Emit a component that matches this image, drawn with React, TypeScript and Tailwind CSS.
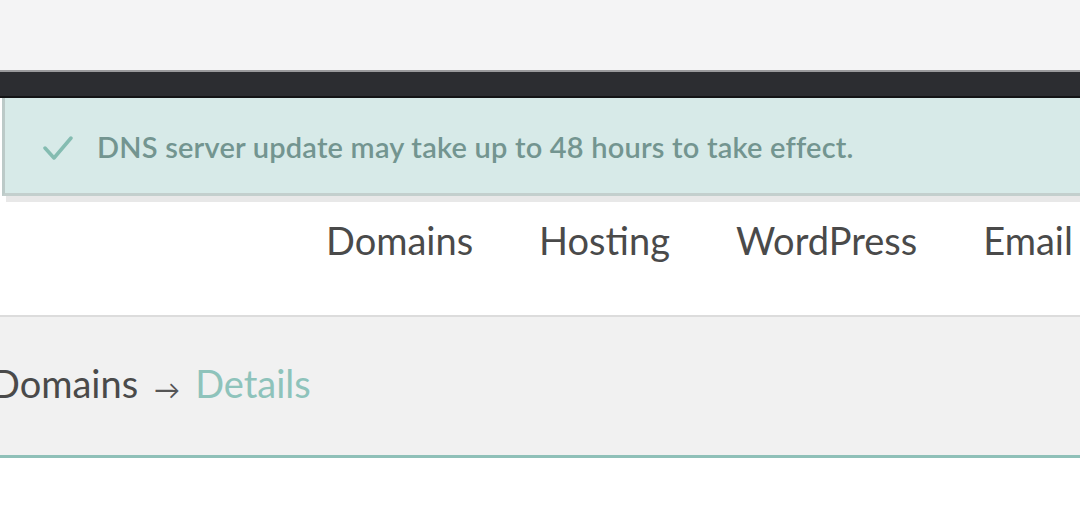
import React from "react";

const navItems = ["Domains", "Hosting", "WordPress", "Email"];

const CheckIcon: React.FC = () => (
  <svg width="30" height="26" viewBox="0 0 30 26" fill="none" className="shrink-0 mt-[4px]">
    <path d="M2 13 L11 23 L28 3" stroke="#84bcb1" strokeWidth="3.5" strokeLinecap="round" strokeLinejoin="round" />
  </svg>
);

const App: React.FC = () => {
  return (
    <div className="w-[1080px] h-[516px] overflow-hidden bg-white" style={{ fontFamily: "Lato, 'Open Sans', sans-serif" }}>
      {/* top strip */}
      <div className="h-[70px] bg-[#f4f4f5]" />

      {/* dark header bar */}
      <div className="h-[28px] bg-[#2c2d31] border-t-2 border-[#9a9a9c] border-b-2 border-b-[#141416]" />

      {/* alert */}
      <div className="pl-[2px] pr-0">
        <div className="h-[98px] bg-[#d7eae8] border-l-[3px] border-[#bccac8] border-b-[3px] border-b-[#c3cfcd] flex items-center pl-[38px] gap-[24px] text-[#739590] whitespace-nowrap">
          <CheckIcon />
          <span className="text-[29px] font-semibold mt-[2px] tracking-[0.2px]">
            DNS server update may take up to 48 hours to take effect.
          </span>
        </div>
        <div className="h-[6px] ml-[4px] bg-[#e8e8e8]" />
      </div>

      {/* primary nav */}
      <nav className="h-[113px] flex items-center pl-[326px] gap-[66px] text-[38px] text-[#4a4a4a] whitespace-nowrap pb-[36px]">
        {navItems.map((item) => (
          <span key={item}>{item}</span>
        ))}
      </nav>

      {/* breadcrumb */}
      <div className="h-[143px] bg-[#f1f1f1] border-t-2 border-[#dcdcdc] border-b-[3px] border-b-[#8fc0b8] flex items-center pb-[6px] whitespace-nowrap">
        <div className="-ml-[9px] flex items-center text-[38px]">
          <span className="text-[#4a4a4a]">Domains</span>
          <span className="ml-[16px] mr-[15px] text-[26px] text-[#555] mt-[12px]">&rarr;</span>
          <span className="text-[#8ec3bb]">Details</span>
        </div>
      </div>
    </div>
  );
};

export default App;
